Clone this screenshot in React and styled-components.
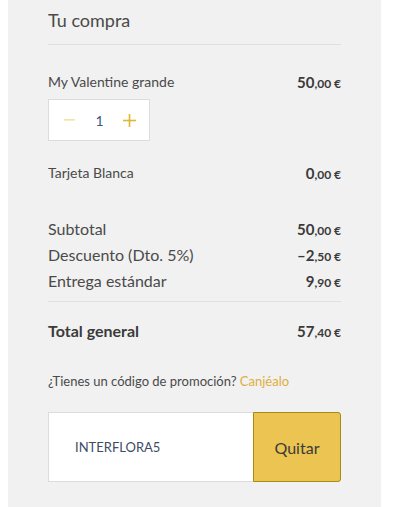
import React from "react";
import styled, { createGlobalStyle } from "styled-components";

const GlobalStyle = createGlobalStyle`
  body {
    margin: 0;
    background: #ffffff;
    font-family: Lato, "Open Sans", sans-serif;
  }
`;

const Panel = styled.div`
  width: 373px;
  min-height: 507px;
  margin-left: 8px;
  box-sizing: border-box;
  background: #f1f1f1;
  padding: 6px 40px 0 40px;
  color: #4a4a4a;
`;

const Title = styled.h2`
  margin: 0;
  font-size: 18px;
  font-weight: 400;
  line-height: 28px;
  color: #4a4a4a;
`;

const Divider = styled.hr`
  border: none;
  border-top: 1px solid #e0e0e0;
  margin: ${(p) => p.$m || "10px 0 0 0"};
`;

const Row = styled.div`
  display: flex;
  justify-content: space-between;
  align-items: center;
  height: ${(p) => (p.$big ? "26px" : "20px")};
  font-size: ${(p) => (p.$big ? "16px" : "14px")};
  font-weight: ${(p) => (p.$bold ? 700 : 400)};
  line-height: 1;
  margin-top: ${(p) => p.$mt || "0"};
  color: ${(p) => (p.$bold ? "#3a3a3a" : "#4a4a4a")};
`;

const Price = styled.span`
  font-weight: 700;
  font-size: 15px;
  line-height: 1;
  color: #3a3a3a;
  small {
    font-size: 12px;
  }
`;

const Stepper = styled.div`
  margin-top: 7px;
  width: 102px;
  height: 42px;
  box-sizing: border-box;
  border: 1px solid #dcdcdc;
  background: #fff;
  display: flex;
  align-items: center;
  justify-content: space-between;
  padding: 0 13px 0 14px;
`;

const StepBtn = styled.button`
  border: none;
  background: none;
  padding: 0;
  width: 13px;
  height: 13px;
  display: flex;
  align-items: center;
  justify-content: center;
  cursor: pointer;
`;

const Qty = styled.span`
  font-size: 14px;
  color: #3b5a80;
`;

const Promo = styled.p`
  margin: 28px 0 0 0;
  font-size: 13px;
  line-height: 18px;
  color: #4a4a4a;
  a {
    color: #dfae3a;
    text-decoration: none;
  }
`;

const CodeForm = styled.div`
  display: flex;
  margin-top: 22px;
  height: 70px;
`;

const CodeInput = styled.div`
  flex: 1;
  background: #fff;
  border: 1px solid #dcdcdc;
  border-right: none;
  display: flex;
  align-items: center;
  padding-left: 26px;
  font-size: 13px;
  color: #3d4c66;
`;

const Button = styled.button`
  width: 88px;
  background: #ebc451;
  border: 1px solid #a98a12;
  border-radius: 0 3px 3px 0;
  font-family: inherit;
  font-size: 16px;
  color: #3a3a3a;
  cursor: pointer;
`;

function Money({ value }) {
  const [int, dec] = value.split(",");
  return (
    <Price>
      {int}
      <small>,{dec} €</small>
    </Price>
  );
}

export default function App() {
  return (
    <>
      <GlobalStyle />
      <Panel>
        <Title>Tu compra</Title>
        <Divider />
        <Row $mt="27px">
          <span>My Valentine grande</span>
          <Money value="50,00" />
        </Row>
        <Stepper>
          <StepBtn aria-label="menos">
            <svg width="11" height="2" viewBox="0 0 11 2">
              <rect width="11" height="1.6" fill="#f2e3a6" />
            </svg>
          </StepBtn>
          <Qty>1</Qty>
          <StepBtn aria-label="más">
            <svg width="13" height="13" viewBox="0 0 13 13">
              <rect x="0" y="5.7" width="13" height="1.6" fill="#dfb737" />
              <rect x="5.7" y="0" width="1.6" height="13" fill="#dfb737" />
            </svg>
          </StepBtn>
        </Stepper>
        <Row $mt="22px">
          <span>Tarjeta Blanca</span>
          <Money value="0,00" />
        </Row>
        <Row $big $mt="33px">
          <span>Subtotal</span>
          <Money value="50,00" />
        </Row>
        <Row $big>
          <span>Descuento (Dto. 5%)</span>
          <Money value="–2,50" />
        </Row>
        <Row $big>
          <span>Entrega estándar</span>
          <Money value="9,90" />
        </Row>
        <Divider $m="7px 0 0 0" />
        <Row $big $bold $mt="16px">
          <span>Total general</span>
          <Money value="57,40" />
        </Row>
        <Promo>
          ¿Tienes un código de promoción? <a href="#">Canjéalo</a>
        </Promo>
        <CodeForm>
          <CodeInput>INTERFLORA5</CodeInput>
          <Button>Quitar</Button>
        </CodeForm>
      </Panel>
    </>
  );
}
